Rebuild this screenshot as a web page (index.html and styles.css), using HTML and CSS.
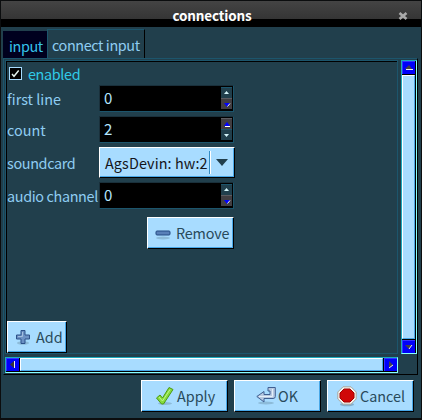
FILE: index.html
```html
<!DOCTYPE html>
<html lang="en">
<head>
<meta charset="utf-8">
<title>connections</title>
<link rel="stylesheet" href="styles.css">
</head>
<body>
<div class="window">
  <header class="titlebar">
    <span class="title">connections</span>
    <svg class="close" width="10" height="10" viewBox="0 0 10 10"><path d="M1.5 2L8.5 8M8.5 2L1.5 8" stroke="#a9a9a9" stroke-width="2.6"/></svg>
  </header>
  <nav class="tabs">
    <div class="tab active"><span>input</span></div>
    <div class="tab"><span>connect input</span></div>
  </nav>
  <main class="notebook">
    <section class="viewport">
      <label class="check"><svg width="13" height="13" viewBox="0 0 13 13"><rect x=".5" y=".5" width="12" height="12" fill="#000" stroke="#a8dcff"/><path d="M3 7L5 9.3L9.7 3.5" fill="none" stroke="#e4f4ee" stroke-width="1.4"/></svg><span>enabled</span></label>
      <div class="row"><span class="label short">first line</span><div class="spin"><span class="value">0</span><div class="steps"><i class="step"><svg width="11" height="11"><path d="M3 7L5.5 4L8 7Z" fill="#d5f5fa"/></svg></i><i class="step gray"><svg width="11" height="12"><path d="M3 5H9L6 9Z" fill="#00f"/><path d="M9 5.5L6.5 8.5" stroke="#fff" stroke-width=".9"/></svg></i></div></div></div>
      <div class="row"><span class="label short">count</span><div class="spin"><span class="value">2</span><div class="steps"><i class="step gray"><svg width="11" height="11"><path d="M3 8L6 4L9 8Z" fill="#00f"/><path d="M4 8.5H9" stroke="#fff"/></svg></i><i class="step"><svg width="11" height="12"><path d="M3 5H8L5.5 8Z" fill="#d5f5fa"/></svg></i></div></div></div>
      <div class="row combo-row"><span class="label">soundcard</span><div class="button combo"><span class="combo-text">AgsDevin: hw:2</span><i class="divider"></i><svg class="arrow" width="14" height="8"><path d="M1 0H13L7 7Z" fill="#213f4d"/></svg></div></div>
      <div class="row last"><span class="label">audio channel</span><div class="spin"><span class="value">0</span><div class="steps"><i class="step"><svg width="11" height="11"><path d="M3 7L5.5 4L8 7Z" fill="#d5f5fa"/></svg></i><i class="step gray"><svg width="11" height="12"><path d="M3 5H9L6 9Z" fill="#00f"/><path d="M9 5.5L6.5 8.5" stroke="#fff" stroke-width=".9"/></svg></i></div></div></div>
      <div class="button remove"><svg width="16" height="16"><ellipse cx="8" cy="13" rx="7" ry="1.5" fill="#8dbbd9"/><rect x="1" y="6" width="14" height="4" rx="1" fill="#5980b8" stroke="#244b83"/></svg><span class="txt">Remove</span></div>
      <div class="button add"><svg width="16" height="16"><ellipse cx="8" cy="14" rx="6" ry="1.8" fill="#8dbbd9"/><path d="M6 1.5H10V6H14.5V10H10V14.5H6V10H1.5V6H6Z" fill="#6c91c4" stroke="#2d5189" stroke-linejoin="round"/><path d="M7.5 3V7.5H3" fill="none" stroke="#a3bfdf"/></svg><span class="txt">Add</span></div>
    </section>
    <aside class="scroll vertical"><i class="end"><svg width="13" height="13"><path d="M3 8L7 4L10 8Z" fill="#444"/><path d="M4 8.5H11" stroke="#eee"/></svg></i><i class="thumb"></i><i class="end"><svg width="13" height="13"><path d="M3 5H10L7 9Z" fill="#444"/><path d="M10 5L7 9" stroke="#eee"/></svg></i></aside>
    <div class="scroll horizontal"><i class="end"><svg width="13" height="13"><path d="M8 3V10L4 6.5Z" fill="#333"/><path d="M8.5 3V10" stroke="#eee"/></svg></i><i class="thumb"></i><i class="end"><svg width="13" height="13"><path d="M5 3V10L9 7Z" fill="#444"/><path d="M5 10L9 7" stroke="#eee"/></svg></i></div>
  </main>
  <footer class="actions">
    <div class="button apply"><svg width="20" height="20"><ellipse cx="10" cy="17.5" rx="7" ry="1.5" fill="#8dbbd9"/><path d="M1.5 12L5 9L7.5 12L14 1.5L18 3.5L8.5 18H6.5Z" fill="#86dc3d" stroke="#4c9a12" stroke-linejoin="round"/><path d="M4 11L7.5 15L15 3.5" fill="none" stroke="#c0f58c"/></svg><span class="txt">Apply</span></div>
    <div class="button ok"><svg width="20" height="20"><ellipse cx="10" cy="17" rx="8" ry="1.5" fill="#8dbbd9"/><path d="M.8 10.5L8 5.5V8.5H14V5H12V1.5H19.3V10.5Q19.3 12.5 17 12.5H8V16Z" fill="#b7c9e1" stroke="#3f5f92" stroke-linejoin="round"/><path d="M3 10.5H16.5V3" fill="none" stroke="#e4eff9"/></svg><span class="txt">OK</span></div>
    <div class="button cancel"><svg width="20" height="21"><ellipse cx="10" cy="18.5" rx="7" ry="1.7" fill="#83afcd"/><path d="M6 .8H14L19.2 6V13L14 18.2H6L.8 13V6Z" fill="#f3f3ed" stroke="#a7a7a0"/><path d="M7 3H13L17 7V12L13 16H7L3 12V7Z" fill="#d00808" stroke="#a40000"/></svg><span class="txt">Cancel</span></div>
  </footer>
</div>
</body>
</html>
```
FILE: styles.css
```css
* { box-sizing: border-box; }
body { margin: 0; font: 14.4px/20px "Noto Sans CJK SC", sans-serif; color: #8fcdf2; background: #000; }
svg { display: block; flex: none; }
i { display: block; }
span { white-space: nowrap; }
.window { width: 422px; height: 420px; border: 1px solid #0b0d0e; border-bottom-width: 2px; background: #213f4c; overflow: hidden; }
.titlebar { height: 26px; display: flex; align-items: center; padding: 3px 13px 0 25px; background: linear-gradient(#444 0, #353535 18px, #000 18px); }
.title { flex: 1; text-align: center; font-weight: bold; font-size: 13.5px; letter-spacing: -.15px; color: #fff; margin-top: -1px; }
.tabs { height: 31px; display: flex; align-items: flex-end; padding-left: 2px; }
.tab { height: 29px; width: 98px; padding: 5px 0 0 4px; border: 1px solid #1c556c; border-right-color: #000; border-bottom: 0; letter-spacing: -.4px; }
.tab.active { width: 44px; height: 27px; background: #00001e; border-color: #00001e; color: #36c3eb; padding: 4px 0 0 5px; }
.notebook { margin-left: 2px; width: 415px; height: 317px; border: 1px solid #1c556c; border-right-color: #000; border-bottom-color: #000; padding: 1px 0 0 1px; display: grid; grid-template: 294px 17px / 393px 17px; gap: 3px; }
.viewport { border: 1px solid #1c556c; box-shadow: inset 1px 1px #000; padding: 4px 0 0 1px; display: flex; flex-direction: column; }
.check { display: flex; align-items: center; gap: 6px; height: 18px; padding-left: 2px; color: #30cbe8; letter-spacing: -.35px; }
.check svg { margin-top: -1px; }
.check span { margin-top: -1px; }
.row { display: flex; align-items: center; height: 27px; margin-top: 2px; }
.row + .row { margin-top: 4px; }
.row.combo-row { height: 31px; }
.label { width: 92px; letter-spacing: -.35px; }
.label.short { letter-spacing: 0; }
.spin { width: 135px; height: 27px; background: #000; border: 1px solid #1a303b; border-right-color: #1c556c; border-bottom-color: #1c556c; display: flex; justify-content: space-between; padding: 1px 1px 0 4px; color: #b4e6ff; }
.value { font-size: 15px; line-height: 22px; }
.steps { width: 11px; }
.step { height: 11px; background: #213f4c; border-top: 1px solid #1c556c; }
.step.gray { background: #413e42; border-color: #5b5b60; }
.step svg { margin-top: -1px; }
.button { display: flex; align-items: center; background: #a8dcff; color: #294a5b; border: 1px solid #fff; border-right-color: #000; border-bottom-color: #000; box-shadow: inset -1px -1px #48a8e8; height: 32px; }
.txt { letter-spacing: 0; margin-top: -1px; }
.combo { width: 136px; height: 31px; padding-left: 5px; color: #15151a; letter-spacing: .1px; }
.divider { width: 2px; height: 23px; background: #338cc4; border-right: 1px solid #fff; margin-left: auto; }
.arrow { margin: 0 5px 0 4px; }
.remove { width: 87px; padding-left: 7px; gap: 5px; margin: 8px 0 0 140px; }
.remove .txt { letter-spacing: -.2px; }
.add { width: 60px; padding-left: 7px; gap: 5px; margin-top: auto; }
.scroll { border: 1px solid #1ba9bd; border-right-color: #8ff; border-bottom-color: #8ff; background: #000; display: flex; gap: 1px; }
.vertical { flex-direction: column; width: 16px; padding-right: 1px; }
.horizontal { height: 16px; padding-bottom: 1px; }
.end { width: 13px; height: 13px; flex: none; background: #0000fa; box-shadow: inset 1px 1px #3333ff; }
.thumb { flex: 1; background: #a8dcff; border: 1px solid #fff; border-right-color: #48a8e8; border-bottom-color: #48a8e8; }
.actions { display: flex; gap: 6px; padding: 5px 0 0 140px; }
.actions .button { width: 87px; }
.apply { padding-left: 13px; gap: 2px; }
.ok { padding-left: 21px; gap: 2px; }
.cancel { padding-left: 9px; gap: 3px; }
```
